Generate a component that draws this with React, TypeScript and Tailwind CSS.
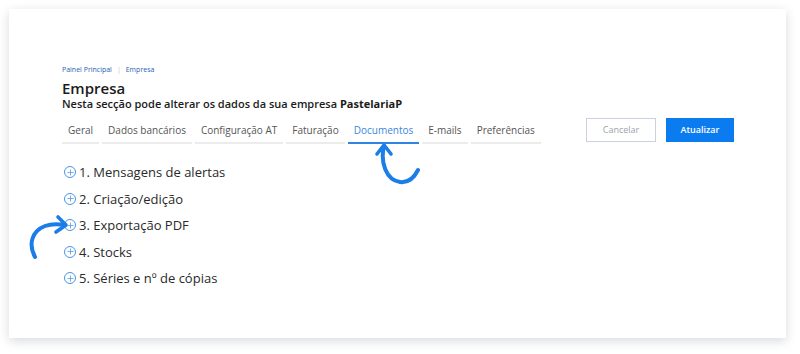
import { Plus } from "lucide-react";

const tabs = ["Geral", "Dados bancários", "Configuração AT", "Faturação", "Documentos", "E-mails", "Preferências"];

const sections = [
  "1. Mensagens de alertas",
  "2. Criação/edição",
  "3. Exportação PDF",
  "4. Stocks",
  "5. Séries e nº de cópias",
];

function PlusCircle() {
  return (
    <span className="w-[12px] h-[12px] rounded-full border border-[#4a94e6] flex items-center justify-center shrink-0">
      <Plus size={9} strokeWidth={2} className="text-[#4a94e6]" />
    </span>
  );
}

export default function App() {
  return (
    <div className="w-[800px] h-[354px] bg-white pt-[9px] pl-[9px] font-['Open_Sans',sans-serif]">
      <div className="relative w-[777px] h-[329px] bg-white shadow-[0_3px_10px_rgba(40,50,80,0.18)] pl-[53px] pt-[57px]">
        <div className="flex items-center gap-[5px] text-[7px] text-[#1f5fb4] leading-none">
          <span>Painel Principal</span>
          <span className="text-[#b8c2d0]">|</span>
          <span>Empresa</span>
        </div>

        <h1 className="mt-[7px] text-[15px] font-semibold text-[#1b1b1b] leading-[16px]">Empresa</h1>
        <p className="mt-[1px] text-[11px] font-semibold text-[#1b1b1b] leading-[13px]">
          Nesta secção pode alterar os dados da sua empresa <span className="font-bold">PastelariaP</span>
        </p>

        <div className="mt-[8px] flex items-start justify-between pr-[52px]">
          <div className="flex gap-[3px] pt-[6px]">
            {tabs.map((t) => {
              const active = t === "Documentos";
              return (
                <div
                  key={t}
                  className={`px-[6px] pb-[5px] text-[10px] leading-[13px] border-b-2 ${
                    active ? "text-[#3a86e0] border-[#2f84e6]" : "text-[#555] border-[#ececec]"
                  }`}
                >
                  {t}
                </div>
              );
            })}
          </div>
          <div className="flex gap-[10px]">
            <button className="w-[70px] h-[24px] border border-[#c9d1de] text-[9px] text-[#9aa3ad] bg-white">
              Cancelar
            </button>
            <button className="w-[68px] h-[24px] bg-[#0b7cf0] text-[9px] font-semibold text-white">
              Atualizar
            </button>
          </div>
        </div>

        <div className="mt-[20px] pl-[2px] flex flex-col gap-[10px]">
          {sections.map((s) => (
            <div key={s} className="flex items-center gap-[3px] text-[13px] text-[#2a2a2a] leading-[16.5px]">
              <PlusCircle />
              <span>{s}</span>
            </div>
          ))}
        </div>

        {/* arrow under Documentos tab */}
        <svg className="absolute left-[361px] top-[131px]" width="50" height="46" viewBox="0 0 50 46" fill="none">
          <path d="M14 6 C10 22 16 40 30 42 C38 43 44 38 48 30" stroke="#1a7de8" strokeWidth="4" strokeLinecap="round" />
          <path d="M7 14 L14 5 L21 14" stroke="#1a7de8" strokeWidth="3.6" strokeLinecap="round" strokeLinejoin="round" />
        </svg>

        {/* arrow pointing at Exportação PDF */}
        <svg className="absolute left-[18px] top-[203px]" width="50" height="50" viewBox="0 0 50 50" fill="none">
          <path d="M8 45 C1 32 5 19 18 14 C26 11 32 12 38 13" stroke="#1a7de8" strokeWidth="4" strokeLinecap="round" />
          <path d="M31 5 L39 13 L29 20" stroke="#1a7de8" strokeWidth="3.6" strokeLinecap="round" strokeLinejoin="round" />
        </svg>
      </div>
    </div>
  );
}
